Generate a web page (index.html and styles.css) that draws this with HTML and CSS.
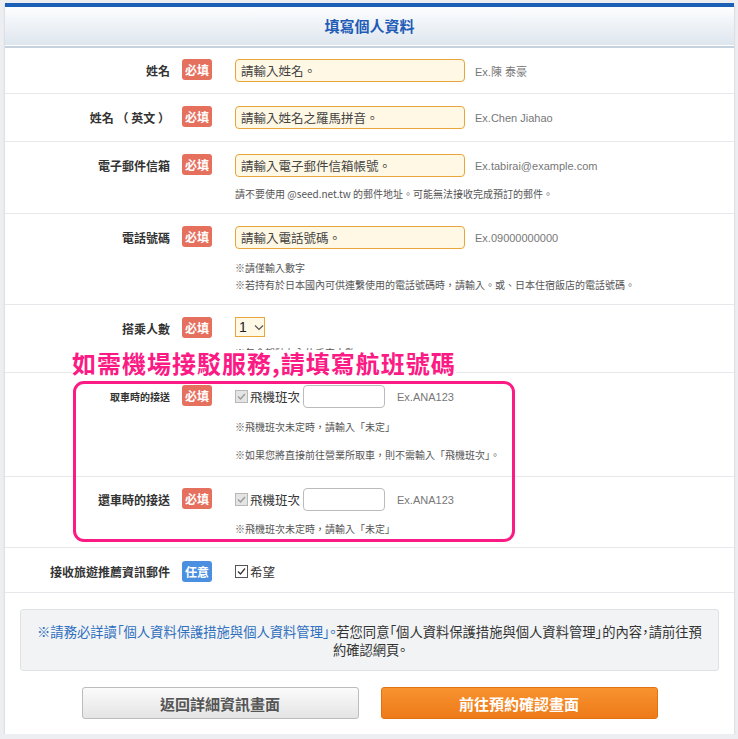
FILE: index.html
```html
<!DOCTYPE html>
<html lang="zh-TW">
<head>
    <meta charset="UTF-8">
    <meta name="viewport" content="width=device-width, initial-scale=1.0">
    <title>填寫個人資料</title>
    <link rel="stylesheet" href="styles.css">
</head>
<body>
    <div class="page">
        <div class="panel">
            <div class="panel-head">
                <h1 class="title">填寫個人資料</h1>
            </div>

            <!-- 姓名 -->
            <div class="form-row row-name">
                <div class="label">姓名</div>
                <div class="badge badge-req">必填</div>
                <div class="field">
                    <div class="line">
                        <input class="text-input" type="text" placeholder="請輸入姓名。">
                        <span class="example">Ex.陳 泰豪</span>
                    </div>
                </div>
            </div>

            <div class="form-row row-name-en">
                <div class="label">姓名 （ 英文 ）</div>
                <div class="badge badge-req">必填</div>
                <div class="field">
                    <div class="line">
                        <input class="text-input" type="text" placeholder="請輸入姓名之羅馬拼音。">
                        <span class="example">Ex.Chen Jiahao</span>
                    </div>
                </div>
            </div>

            <div class="form-row row-mail">
                <div class="label">電子郵件信箱</div>
                <div class="badge badge-req">必填</div>
                <div class="field">
                    <div class="line">
                        <input class="text-input" type="text" placeholder="請輸入電子郵件信箱帳號。">
                        <span class="example">Ex.tabirai@example.com</span>
                    </div>
                    <p class="note">請不要使用 @seed.net.tw 的郵件地址。可能無法接收完成預訂的郵件。</p>
                </div>
            </div>

            <div class="form-row row-tel">
                <div class="label">電話號碼</div>
                <div class="badge badge-req">必填</div>
                <div class="field">
                    <div class="line">
                        <input class="text-input" type="text" placeholder="請輸入電話號碼。">
                        <span class="example">Ex.09000000000</span>
                    </div>
                    <p class="note">※請僅輸入數字</p>
                    <p class="note">※若持有於日本國內可供連繫使用的電話號碼時，請輸入。或、日本住宿飯店的電話號碼。</p>
                </div>
            </div>

            <div class="form-row row-people">
                <div class="label">搭乘人數</div>
                <div class="badge badge-req">必填</div>
                <div class="field">
                    <div class="select-box">1
                        <svg width="10" height="7" viewBox="0 0 10 7"><path d="M1 1.5l4 4 4-4" fill="none" stroke="#555" stroke-width="1.2"/></svg>
                    </div>
                    <p class="note">※包含駕駛在內的乘車人數。</p>
                </div>
            </div>

            <!-- 機場接送 -->
            <div class="form-row row-pickup">
                <div class="label label-small">取車時的接送</div>
                <div class="badge badge-req">必填</div>
                <div class="field">
                    <div class="line">
                        <span class="check check-off">
                            <svg width="11" height="11" viewBox="0 0 11 11"><path d="M2 5.5l2.5 2.5 4.5-5" fill="none" stroke="#9a9a9a" stroke-width="1.4"/></svg>
                        </span>
                        <span class="check-text">飛機班次</span>
                        <input class="flight-input" type="text">
                        <span class="example example-wide">Ex.ANA123</span>
                    </div>
                    <p class="note">※飛機班次未定時，請輸入「未定」</p>
                    <p class="note note-gap">※如果您將直接前往營業所取車，則不需輸入「飛機班次」。</p>
                </div>
            </div>

            <div class="form-row row-return">
                <div class="label">還車時的接送</div>
                <div class="badge badge-req">必填</div>
                <div class="field">
                    <div class="line">
                        <span class="check check-off">
                            <svg width="11" height="11" viewBox="0 0 11 11"><path d="M2 5.5l2.5 2.5 4.5-5" fill="none" stroke="#9a9a9a" stroke-width="1.4"/></svg>
                        </span>
                        <span class="check-text">飛機班次</span>
                        <input class="flight-input" type="text">
                        <span class="example example-wide">Ex.ANA123</span>
                    </div>
                    <p class="note">※飛機班次未定時，請輸入「未定」</p>
                </div>
            </div>

            <div class="form-row row-news">
                <div class="label">接收旅遊推薦資訊郵件</div>
                <div class="badge badge-opt">任意</div>
                <div class="field">
                    <div class="line line-small">
                        <span class="check check-on">
                            <svg width="11" height="11" viewBox="0 0 11 11"><path d="M2 5.5l2.5 2.5 4.5-5.5" fill="none" stroke="#333" stroke-width="1.2"/></svg>
                        </span>
                        <span class="check-text">希望</span>
                    </div>
                </div>
            </div>

            <!-- 說明與按鈕 -->
            <div class="footer">
                <div class="notice">
                    <span class="notice-blue">※請務必詳讀「個人資料保護措施與個人資料管理」。</span>若您同意「個人資料保護措施與個人資料管理」的內容，請前往預約確認網頁。
                </div>
                <div class="actions">
                    <button class="btn btn-back">返回詳細資訊畫面</button>
                    <button class="btn btn-next">前往預約確認畫面</button>
                </div>
            </div>
        </div>

        <!-- 標註 -->
        <div class="callout-title">如需機場接駁服務,請填寫航班號碼</div>
        <div class="callout-box"></div>
    </div>
</body>
</html>
```

FILE: styles.css
```css
* {
    margin: 0;
    padding: 0;
    box-sizing: border-box;
}

body {
    background: #eceef1;
    font-family: "Noto Sans CJK TC", "Noto Sans", sans-serif;
    color: #333;
}

.page {
    position: relative;
    padding: 3px 4px 0 5px;
}

.panel {
    background: #fff;
    box-shadow: 0 2px 2px rgba(0,0,0,0.18);
}

/* 標題 */
.panel-head {
    border-top: 4px solid #1b5fb6;
    border-bottom: 2px solid #c6d1de;
    background: linear-gradient(#fdfeff, #dde5ed);
    box-shadow: inset 0 -1px 0 #fff;
    height: 45px;
}
.title {
    font-size: 15px;
    line-height: 38px;
    color: #1f5cb6;
    text-align: center;
}

/* 表單列 */
.form-row {
    display: grid;
    grid-template-columns: 177px 30px 1fr;
    align-items: start;
    border-bottom: 1px solid #e6e8eb;
    padding: 11px 0 11px;
}
.row-name-en { padding: 12px 0 12px; }
.row-mail { padding: 12px 0 11px; }
.row-tel { padding: 12px 0 11px; }
.row-people { padding: 12px 0 11px; }
.row-pickup { padding: 12px 0 13px; }
.row-return { padding: 11px 0 10px; }
.row-news { padding: 13px 0 10px; }

.label {
    font-size: 12px;
    font-weight: bold;
    line-height: 23px;
    text-align: right;
    padding-right: 12px;
    color: #333;
}
.label-small {
    font-size: 10px;
}
.row-news .label {
    line-height: 21px;
}

.badge {
    height: 21px;
    line-height: 21px;
    border-radius: 3px;
    color: #fff;
    font-size: 12px;
    font-weight: bold;
    text-align: center;
}
.badge-req {
    background: #e6705e;
}
.badge-opt {
    background: #4b8fe0;
}

.field {
    padding-left: 23px;
}
.line {
    display: flex;
    align-items: center;
    height: 23px;
}
.line-small {
    height: 21px;
}

.text-input {
    width: 230px;
    height: 23px;
    border: 1px solid #e8a53c;
    border-radius: 4px;
    background: #fff8e5;
    padding: 0 5px;
    font-family: inherit;
    font-size: 12.5px;
    outline: none;
}
.text-input::placeholder {
    color: #444;
}

.example {
    margin-left: 10px;
    font-family: "Liberation Sans", "Noto Sans CJK TC", sans-serif;
    font-size: 11px;
    color: #777;
}
.example-wide {
    margin-left: 12px;
}

.note {
    font-size: 10px;
    line-height: 17px;
    color: #555;
}
.line + .note {
    margin-top: 10px;
}
.note + .note {
    margin-top: 0;
}
.row-pickup .note-gap {
    margin-top: 11px;
}
.row-return .line + .note {
    margin-top: 9px;
}
.row-mail .line + .note {
    margin-top: 8px;
}

/* 人數選單 */
.select-box {
    display: flex;
    align-items: center;
    gap: 7px;
    width: 30px;
    height: 20px;
    border: 1.5px solid #e8a53c;
    background: #fff8e5;
    padding-left: 3px;
    font-family: "Liberation Sans", sans-serif;
    font-size: 14px;
    line-height: 17px;
    color: #222;
}
.row-people .note {
    margin-top: 8px;
    line-height: 16px;
}

/* 勾選框 */
.check {
    display: inline-flex;
    align-items: center;
    justify-content: center;
    width: 13px;
    height: 13px;
}
.check-off {
    border: 1px solid #b8b8b8;
    background: #e4e4e4;
}
.check-on {
    border: 1px solid #555;
    background: #fff;
}
.check-text {
    margin-left: 2px;
    font-size: 12.5px;
    color: #333;
}
.flight-input {
    width: 82px;
    height: 23px;
    margin-left: 3px;
    border: 1px solid #bbb;
    border-radius: 4px;
    background: #fff;
    outline: none;
}

/* 說明 */
.footer {
    padding: 16px 15px 15px;
}
.notice {
    background: #f2f3f5;
    border: 1px solid #e0e2e6;
    border-radius: 3px;
    padding: 13px 12px 11px;
    font-size: 13.3px;
    line-height: 18px;
    text-align: center;
    color: #333;
    font-feature-settings: "palt";
}
.notice-blue {
    color: #2e6fbe;
}

.actions {
    display: flex;
    justify-content: center;
    gap: 22px;
    margin-top: 16px;
}
.btn {
    width: 277px;
    height: 32px;
    border-radius: 3px;
    font-family: inherit;
    font-size: 15px;
    font-weight: bold;
    cursor: pointer;
}
.btn-back {
    background: linear-gradient(#fbfbfb, #e4e4e4);
    border: 1px solid #bcbcbc;
    color: #555;
}
.btn-next {
    background: linear-gradient(#f7932f, #ee7a19);
    border: 1px solid #e07212;
    color: #fff;
}

/* 標註 */
.callout-title {
    position: absolute;
    left: 72px;
    top: 350px;
    background: #fff;
    color: #fc1a84;
    font-size: 24px;
    font-weight: bold;
    line-height: 26px;
    letter-spacing: 1px;
}
.callout-box {
    position: absolute;
    left: 73px;
    top: 381px;
    width: 442px;
    height: 161px;
    border: 3px solid #fc1a84;
    border-radius: 11px;
}
```
